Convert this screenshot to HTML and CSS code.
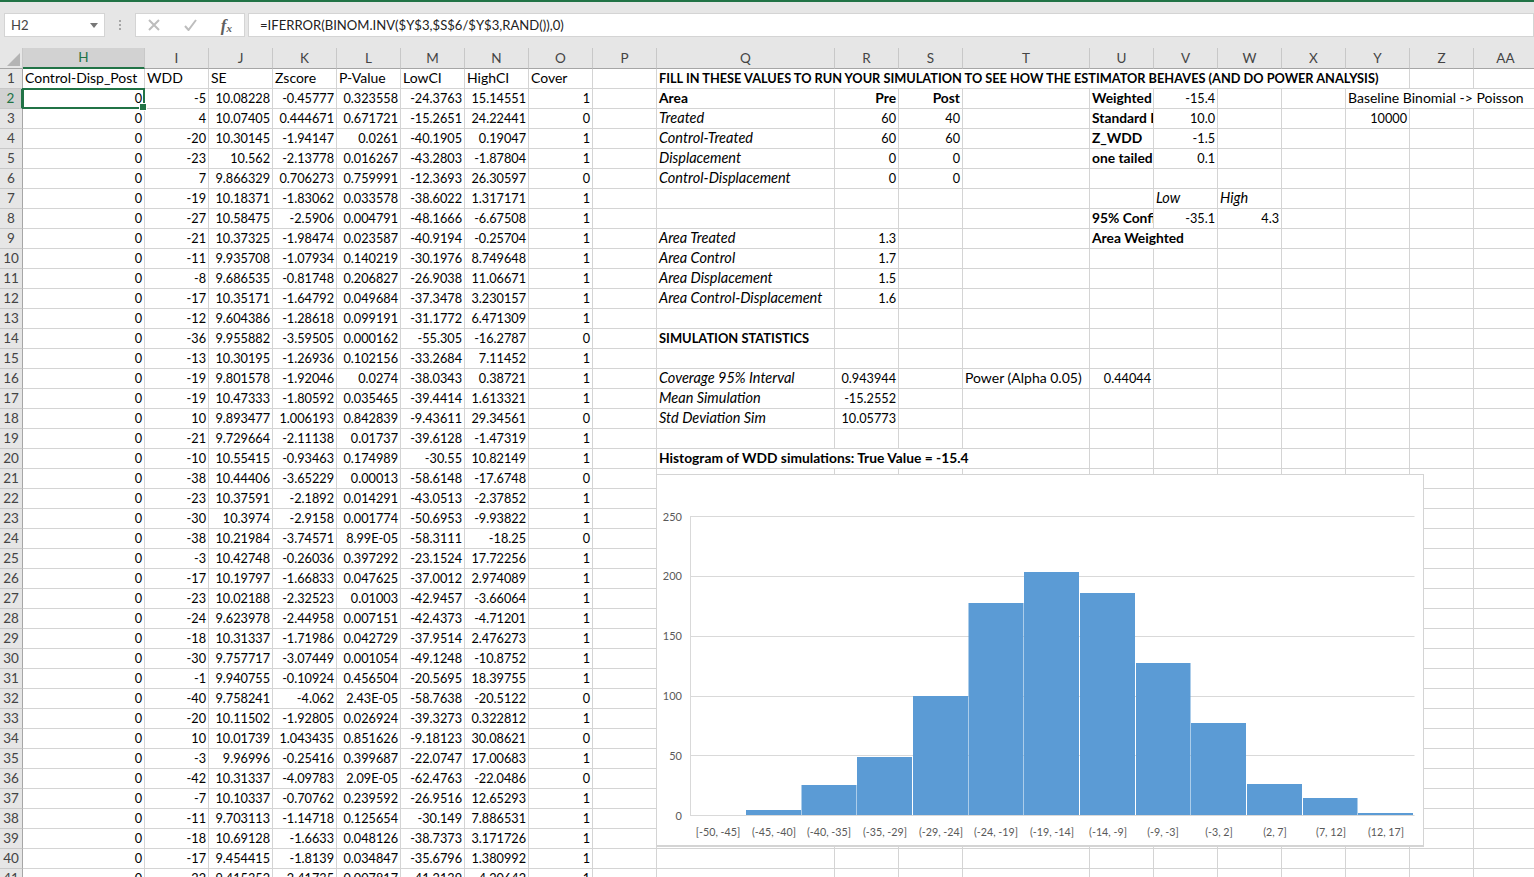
FILE: index.html
```html
<!DOCTYPE html>
<html lang="en">
<head>
<meta charset="utf-8">
<title>Simulation workbook</title>
<link rel="stylesheet" href="styles.css">
</head>
<body>
<div class="app">
<header class="formula-row">
  <div class="name-box"><span>H2</span><svg class="caret" width="8" height="5" viewBox="0 0 8 5"><path d="M0 0h8L4 5z"/></svg></div>
  <div class="grip"><i></i><i></i><i></i></div>
  <div class="fx-buttons">
    <svg class="ic" width="12" height="12" viewBox="0 0 12 12"><path d="M1 1l10 10M11 1L1 11"/></svg>
    <svg class="ic" width="13" height="12" viewBox="0 0 13 12"><path d="M1 7l3.500 4L12 1"/></svg>
    <span class="fx">f<sub>x</sub></span>
  </div>
  <div class="formula-input">=IFERROR(BINOM.INV($Y$3,$S$6/$Y$3,RAND()),0)</div>
</header>
<main class="sheet">
<table class="grid">
<colgroup><col class="c-rh"><col class="c-h"><col class="c"><col class="c"><col class="c"><col class="c"><col class="c"><col class="c"><col class="c"><col class="c"><col class="c-q"><col class="c"><col class="c"><col class="c-t"><col class="c"><col class="c"><col class="c"><col class="c"><col class="c"><col class="c"><col class="c"></colgroup>
<thead><tr><th class="corner"><svg width="13" height="13" viewBox="0 0 13 13"><path d="M13 0v13H0z"/></svg></th><th class="on">H</th><th>I</th><th>J</th><th>K</th><th>L</th><th>M</th><th>N</th><th>O</th><th>P</th><th>Q</th><th>R</th><th>S</th><th>T</th><th>U</th><th>V</th><th>W</th><th>X</th><th>Y</th><th>Z</th><th>AA</th></tr></thead>
<tbody>
<tr><th>1</th><td class="t">Control-Disp_Post</td><td class="t">WDD</td><td class="t">SE</td><td class="t">Zscore</td><td class="t">P-Value</td><td class="t">LowCI</td><td class="t">HighCI</td><td class="t">Cover</td><td></td><td class="t b caps title" colspan="9">FILL IN THESE VALUES TO RUN YOUR SIMULATION TO SEE HOW THE ESTIMATOR BEHAVES (AND DO POWER ANALYSIS)</td><td></td><td></td></tr>
<tr><th class="on">2</th><td class="sel">0</td><td>-5</td><td>10.08228</td><td>-0.45777</td><td>0.323558</td><td>-24.3763</td><td>15.14551</td><td>1</td><td></td><td class="t b">Area</td><td class="b">Pre</td><td class="b">Post</td><td></td><td class="t b">Weighted</td><td>-15.4</td><td></td><td></td><td class="t" colspan="3">Baseline Binomial -&gt; Poisson</td></tr>
<tr><th>3</th><td>0</td><td>4</td><td>10.07405</td><td>0.444671</td><td>0.671721</td><td>-15.2651</td><td>24.22441</td><td>0</td><td></td><td class="t i">Treated</td><td>60</td><td>40</td><td></td><td class="t b">Standard E</td><td>10.0</td><td></td><td></td><td>10000</td><td></td><td></td></tr>
<tr><th>4</th><td>0</td><td>-20</td><td>10.30145</td><td>-1.94147</td><td>0.0261</td><td>-40.1905</td><td>0.19047</td><td>1</td><td></td><td class="t i">Control-Treated</td><td>60</td><td>60</td><td></td><td class="t b">Z_WDD</td><td>-1.5</td><td></td><td></td><td></td><td></td><td></td></tr>
<tr><th>5</th><td>0</td><td>-23</td><td>10.562</td><td>-2.13778</td><td>0.016267</td><td>-43.2803</td><td>-1.87804</td><td>1</td><td></td><td class="t i">Displacement</td><td>0</td><td>0</td><td></td><td class="t b">one tailed</td><td>0.1</td><td></td><td></td><td></td><td></td><td></td></tr>
<tr><th>6</th><td>0</td><td>7</td><td>9.866329</td><td>0.706273</td><td>0.759991</td><td>-12.3693</td><td>26.30597</td><td>0</td><td></td><td class="t i">Control-Displacement</td><td>0</td><td>0</td><td></td><td></td><td></td><td></td><td></td><td></td><td></td><td></td></tr>
<tr><th>7</th><td>0</td><td>-19</td><td>10.18371</td><td>-1.83062</td><td>0.033578</td><td>-38.6022</td><td>1.317171</td><td>1</td><td></td><td></td><td></td><td></td><td></td><td></td><td class="t i">Low</td><td class="t i">High</td><td></td><td></td><td></td><td></td></tr>
<tr><th>8</th><td>0</td><td>-27</td><td>10.58475</td><td>-2.5906</td><td>0.004791</td><td>-48.1666</td><td>-6.67508</td><td>1</td><td></td><td></td><td></td><td></td><td></td><td class="t b">95% Confi</td><td>-35.1</td><td>4.3</td><td></td><td></td><td></td><td></td></tr>
<tr><th>9</th><td>0</td><td>-21</td><td>10.37325</td><td>-1.98474</td><td>0.023587</td><td>-40.9194</td><td>-0.25704</td><td>1</td><td></td><td class="t i">Area Treated</td><td>1.3</td><td></td><td></td><td class="t b" colspan="2">Area Weighted</td><td></td><td></td><td></td><td></td><td></td></tr>
<tr><th>10</th><td>0</td><td>-11</td><td>9.935708</td><td>-1.07934</td><td>0.140219</td><td>-30.1976</td><td>8.749648</td><td>1</td><td></td><td class="t i">Area Control</td><td>1.7</td><td></td><td></td><td></td><td></td><td></td><td></td><td></td><td></td><td></td></tr>
<tr><th>11</th><td>0</td><td>-8</td><td>9.686535</td><td>-0.81748</td><td>0.206827</td><td>-26.9038</td><td>11.06671</td><td>1</td><td></td><td class="t i">Area Displacement</td><td>1.5</td><td></td><td></td><td></td><td></td><td></td><td></td><td></td><td></td><td></td></tr>
<tr><th>12</th><td>0</td><td>-17</td><td>10.35171</td><td>-1.64792</td><td>0.049684</td><td>-37.3478</td><td>3.230157</td><td>1</td><td></td><td class="t i">Area Control-Displacement</td><td>1.6</td><td></td><td></td><td></td><td></td><td></td><td></td><td></td><td></td><td></td></tr>
<tr><th>13</th><td>0</td><td>-12</td><td>9.604386</td><td>-1.28618</td><td>0.099191</td><td>-31.1772</td><td>6.471309</td><td>1</td><td></td><td></td><td></td><td></td><td></td><td></td><td></td><td></td><td></td><td></td><td></td><td></td></tr>
<tr><th>14</th><td>0</td><td>-36</td><td>9.955882</td><td>-3.59505</td><td>0.000162</td><td>-55.305</td><td>-16.2787</td><td>0</td><td></td><td class="t b caps">SIMULATION STATISTICS</td><td></td><td></td><td></td><td></td><td></td><td></td><td></td><td></td><td></td><td></td></tr>
<tr><th>15</th><td>0</td><td>-13</td><td>10.30195</td><td>-1.26936</td><td>0.102156</td><td>-33.2684</td><td>7.11452</td><td>1</td><td></td><td></td><td></td><td></td><td></td><td></td><td></td><td></td><td></td><td></td><td></td><td></td></tr>
<tr><th>16</th><td>0</td><td>-19</td><td>9.801578</td><td>-1.92046</td><td>0.0274</td><td>-38.0343</td><td>0.38721</td><td>1</td><td></td><td class="t i">Coverage 95% Interval</td><td>0.943944</td><td></td><td class="t">Power (Alpha 0.05)</td><td>0.44044</td><td></td><td></td><td></td><td></td><td></td><td></td></tr>
<tr><th>17</th><td>0</td><td>-19</td><td>10.47333</td><td>-1.80592</td><td>0.035465</td><td>-39.4414</td><td>1.613321</td><td>1</td><td></td><td class="t i">Mean Simulation</td><td>-15.2552</td><td></td><td></td><td></td><td></td><td></td><td></td><td></td><td></td><td></td></tr>
<tr><th>18</th><td>0</td><td>10</td><td>9.893477</td><td>1.006193</td><td>0.842839</td><td>-9.43611</td><td>29.34561</td><td>0</td><td></td><td class="t i">Std Deviation Sim</td><td>10.05773</td><td></td><td></td><td></td><td></td><td></td><td></td><td></td><td></td><td></td></tr>
<tr><th>19</th><td>0</td><td>-21</td><td>9.729664</td><td>-2.11138</td><td>0.01737</td><td>-39.6128</td><td>-1.47319</td><td>1</td><td></td><td></td><td></td><td></td><td></td><td></td><td></td><td></td><td></td><td></td><td></td><td></td></tr>
<tr><th>20</th><td>0</td><td>-10</td><td>10.55415</td><td>-0.93463</td><td>0.174989</td><td>-30.55</td><td>10.82149</td><td>1</td><td></td><td class="t b" colspan="4">Histogram of WDD simulations: True Value = -15.4</td><td></td><td></td><td></td><td></td><td></td><td></td><td></td></tr>
<tr><th>21</th><td>0</td><td>-38</td><td>10.44406</td><td>-3.65229</td><td>0.00013</td><td>-58.6148</td><td>-17.6748</td><td>0</td><td></td><td></td><td></td><td></td><td></td><td></td><td></td><td></td><td></td><td></td><td></td><td></td></tr>
<tr><th>22</th><td>0</td><td>-23</td><td>10.37591</td><td>-2.1892</td><td>0.014291</td><td>-43.0513</td><td>-2.37852</td><td>1</td><td></td><td></td><td></td><td></td><td></td><td></td><td></td><td></td><td></td><td></td><td></td><td></td></tr>
<tr><th>23</th><td>0</td><td>-30</td><td>10.3974</td><td>-2.9158</td><td>0.001774</td><td>-50.6953</td><td>-9.93822</td><td>1</td><td></td><td></td><td></td><td></td><td></td><td></td><td></td><td></td><td></td><td></td><td></td><td></td></tr>
<tr><th>24</th><td>0</td><td>-38</td><td>10.21984</td><td>-3.74571</td><td>8.99E-05</td><td>-58.3111</td><td>-18.25</td><td>0</td><td></td><td></td><td></td><td></td><td></td><td></td><td></td><td></td><td></td><td></td><td></td><td></td></tr>
<tr><th>25</th><td>0</td><td>-3</td><td>10.42748</td><td>-0.26036</td><td>0.397292</td><td>-23.1524</td><td>17.72256</td><td>1</td><td></td><td></td><td></td><td></td><td></td><td></td><td></td><td></td><td></td><td></td><td></td><td></td></tr>
<tr><th>26</th><td>0</td><td>-17</td><td>10.19797</td><td>-1.66833</td><td>0.047625</td><td>-37.0012</td><td>2.974089</td><td>1</td><td></td><td></td><td></td><td></td><td></td><td></td><td></td><td></td><td></td><td></td><td></td><td></td></tr>
<tr><th>27</th><td>0</td><td>-23</td><td>10.02188</td><td>-2.32523</td><td>0.01003</td><td>-42.9457</td><td>-3.66064</td><td>1</td><td></td><td></td><td></td><td></td><td></td><td></td><td></td><td></td><td></td><td></td><td></td><td></td></tr>
<tr><th>28</th><td>0</td><td>-24</td><td>9.623978</td><td>-2.44958</td><td>0.007151</td><td>-42.4373</td><td>-4.71201</td><td>1</td><td></td><td></td><td></td><td></td><td></td><td></td><td></td><td></td><td></td><td></td><td></td><td></td></tr>
<tr><th>29</th><td>0</td><td>-18</td><td>10.31337</td><td>-1.71986</td><td>0.042729</td><td>-37.9514</td><td>2.476273</td><td>1</td><td></td><td></td><td></td><td></td><td></td><td></td><td></td><td></td><td></td><td></td><td></td><td></td></tr>
<tr><th>30</th><td>0</td><td>-30</td><td>9.757717</td><td>-3.07449</td><td>0.001054</td><td>-49.1248</td><td>-10.8752</td><td>1</td><td></td><td></td><td></td><td></td><td></td><td></td><td></td><td></td><td></td><td></td><td></td><td></td></tr>
<tr><th>31</th><td>0</td><td>-1</td><td>9.940755</td><td>-0.10924</td><td>0.456504</td><td>-20.5695</td><td>18.39755</td><td>1</td><td></td><td></td><td></td><td></td><td></td><td></td><td></td><td></td><td></td><td></td><td></td><td></td></tr>
<tr><th>32</th><td>0</td><td>-40</td><td>9.758241</td><td>-4.062</td><td>2.43E-05</td><td>-58.7638</td><td>-20.5122</td><td>0</td><td></td><td></td><td></td><td></td><td></td><td></td><td></td><td></td><td></td><td></td><td></td><td></td></tr>
<tr><th>33</th><td>0</td><td>-20</td><td>10.11502</td><td>-1.92805</td><td>0.026924</td><td>-39.3273</td><td>0.322812</td><td>1</td><td></td><td></td><td></td><td></td><td></td><td></td><td></td><td></td><td></td><td></td><td></td><td></td></tr>
<tr><th>34</th><td>0</td><td>10</td><td>10.01739</td><td>1.043435</td><td>0.851626</td><td>-9.18123</td><td>30.08621</td><td>0</td><td></td><td></td><td></td><td></td><td></td><td></td><td></td><td></td><td></td><td></td><td></td><td></td></tr>
<tr><th>35</th><td>0</td><td>-3</td><td>9.96996</td><td>-0.25416</td><td>0.399687</td><td>-22.0747</td><td>17.00683</td><td>1</td><td></td><td></td><td></td><td></td><td></td><td></td><td></td><td></td><td></td><td></td><td></td><td></td></tr>
<tr><th>36</th><td>0</td><td>-42</td><td>10.31337</td><td>-4.09783</td><td>2.09E-05</td><td>-62.4763</td><td>-22.0486</td><td>0</td><td></td><td></td><td></td><td></td><td></td><td></td><td></td><td></td><td></td><td></td><td></td><td></td></tr>
<tr><th>37</th><td>0</td><td>-7</td><td>10.10337</td><td>-0.70762</td><td>0.239592</td><td>-26.9516</td><td>12.65293</td><td>1</td><td></td><td></td><td></td><td></td><td></td><td></td><td></td><td></td><td></td><td></td><td></td><td></td></tr>
<tr><th>38</th><td>0</td><td>-11</td><td>9.703113</td><td>-1.14718</td><td>0.125654</td><td>-30.149</td><td>7.886531</td><td>1</td><td></td><td></td><td></td><td></td><td></td><td></td><td></td><td></td><td></td><td></td><td></td><td></td></tr>
<tr><th>39</th><td>0</td><td>-18</td><td>10.69128</td><td>-1.6633</td><td>0.048126</td><td>-38.7373</td><td>3.171726</td><td>1</td><td></td><td></td><td></td><td></td><td></td><td></td><td></td><td></td><td></td><td></td><td></td><td></td></tr>
<tr><th>40</th><td>0</td><td>-17</td><td>9.454415</td><td>-1.8139</td><td>0.034847</td><td>-35.6796</td><td>1.380992</td><td>1</td><td></td><td></td><td></td><td></td><td></td><td></td><td></td><td></td><td></td><td></td><td></td><td></td></tr>
<tr><th>41</th><td>0</td><td>-22</td><td>9.415352</td><td>-2.41735</td><td>0.007817</td><td>-41.2139</td><td>-4.20642</td><td>1</td><td></td><td></td><td></td><td></td><td></td><td></td><td></td><td></td><td></td><td></td><td></td><td></td></tr>
</tbody>
</table>
<figure class="chart">
<svg width="768" height="373" viewBox="656 474 768 373">
  <g class="gl">
    <path d="M690.500 516.500H1414.500M690.500 576.500H1414.500M690.500 636.500H1414.500M690.500 696.500H1414.500M690.500 755.500H1414.500M690.500 815.500H1414.500M690.500 516V816"/>
  </g>
  <g class="bars">
    <rect x="746" y="810" width="55" height="5"/>
    <rect x="801.500" y="785" width="55" height="30"/>
    <rect x="857" y="757" width="55" height="58"/>
    <rect x="913" y="696" width="55" height="119"/>
    <rect x="968.500" y="603" width="55" height="212"/>
    <rect x="1024" y="572" width="55" height="243"/>
    <rect x="1080" y="593" width="55" height="222"/>
    <rect x="1136" y="663" width="54.500" height="152"/>
    <rect x="1191" y="723" width="55" height="92"/>
    <rect x="1247" y="784" width="55" height="31"/>
    <rect x="1303" y="798" width="54.500" height="17"/>
    <rect x="1358" y="813" width="55" height="2"/>
  </g>
  <g class="ya">
    <text x="682" y="521">250</text><text x="682" y="580">200</text><text x="682" y="640">150</text><text x="682" y="700">100</text><text x="682" y="760">50</text><text x="682" y="820">0</text>
  </g>
  <g class="xa">
    <text x="718" y="836">[-50, -45]</text><text x="774" y="836">(-45, -40]</text><text x="829" y="836">(-40, -35]</text><text x="885" y="836">(-35, -29]</text><text x="941" y="836">(-29, -24]</text><text x="996" y="836">(-24, -19]</text><text x="1052" y="836">(-19, -14]</text><text x="1108" y="836">(-14, -9]</text><text x="1163" y="836">(-9, -3]</text><text x="1219" y="836">(-3, 2]</text><text x="1275" y="836">(2, 7]</text><text x="1331" y="836">(7, 12]</text><text x="1386" y="836">(12, 17]</text>
  </g>
</svg>
</figure>
</main>
</div>
</body>
</html>
```

FILE: styles.css
```css
* { box-sizing: border-box; }
html, body { margin: 0; padding: 0; }
body { width: 1534px; height: 877px; overflow: hidden; background: #fff; font-family: "Lato", "Liberation Sans", sans-serif; color: #000; }
.app { display: flex; flex-direction: column; height: 877px; overflow: hidden; }

.formula-row { flex: none; height: 48px; display: flex; align-items: flex-start; padding: 11px 0 0 4px; background: #e6e6e6; border-top: 2px solid #217346; color: #444; font-size: 13.100px; }
.name-box { width: 101px; height: 24px; background: #fff; border: 1px solid #d4d4d4; display: flex; align-items: center; justify-content: space-between; padding: 0 6px 0 6px; }
.caret path { fill: #777; }
.grip { width: 30px; height: 24px; display: flex; flex-direction: column; align-items: center; justify-content: center; gap: 2px; }
.grip i { width: 2px; height: 2px; background: #a6a6a6; }
.fx-buttons { width: 110px; height: 24px; background: #fff; border: 1px solid #d4d4d4; display: flex; align-items: center; justify-content: space-between; padding: 0 12px 0 12px; }
.ic path { fill: none; stroke: #bdbdbd; stroke-width: 2; }
.fx { font-family: "Liberation Serif", serif; font-style: italic; font-weight: bold; font-size: 17px; color: #5f5f5f; line-height: 1; }
.fx sub { font-size: 11px; vertical-align: -1px; line-height: 0; }
.formula-input { flex: 1; height: 24px; margin-left: 3px; background: #fff; border: 1px solid #d4d4d4; padding: 0 0 0 11px; line-height: 22px; white-space: nowrap; color: #222; }

.sheet { position: relative; flex: 1; overflow: hidden; }
.grid { table-layout: fixed; width: 1538px; border-collapse: separate; border-spacing: 0; font-size: 13.500px; line-height: 19px; }
.c-rh { width: 23px; }
.c-h { width: 122px; }
.c { width: 64px; }
.c-q { width: 178px; }
.c-t { width: 127px; }
th { height: 20px; padding: 0; font-weight: 400; background: #e6e6e6; color: #444; text-align: center; border-right: 1px solid #c8c8c8; border-bottom: 1px solid #c8c8c8; }
thead th { border-bottom-color: #a6a6a6; }
tbody th { border-right-color: #a6a6a6; }
th.on { background: #d2d2d2; color: #217346; }
thead th.on { border-bottom: 2px solid #217346; }
tbody th.on { border-right: 2px solid #217346; }
.corner { vertical-align: bottom; text-align: right; padding: 0 2px 2px 0; }
.corner svg { display: block; margin-left: auto; }
.corner path { fill: #b4b4b4; }
td { height: 20px; padding: 0 2px 0 2px; font-size: 12.700px; line-height: 19px; text-align: right; white-space: nowrap; overflow: hidden; border-right: 1px solid #d4d4d4; border-bottom: 1px solid #d4d4d4; }
td.t { text-align: left; font-size: 14px; line-height: 17px; padding-bottom: 2px; }
td.b { font-weight: 700; font-size: 13.800px; line-height: 17px; padding-bottom: 2px; }
td.i { font-style: italic; font-size: 14.500px; line-height: 17px; padding-bottom: 2px; }
td.caps { font-size: 12.900px; line-height: 19px; padding-bottom: 0; }
td.title { font-size: 12.750px; }
td.sel { position: relative; overflow: visible; }
td.sel::before { content: ""; position: absolute; inset: -1px -1px -1px -1px; border: 2px solid #217346; pointer-events: none; }
td.sel::after { content: ""; position: absolute; right: -3px; bottom: -3px; width: 6px; height: 6px; background: #217346; border: 1px solid #fff; }

.chart { position: absolute; left: 656px; top: 426px; width: 768px; height: 373px; margin: 0; background: #fff; border-left: 1px solid #d4d4d4; border-top: 1px solid #d4d4d4; border-right: 1px solid #d4d4d4; border-bottom: 2px solid #d4d4d4; overflow: hidden; }
.chart svg { display: block; margin: -1px 0 0 -1px; }
.gl path { fill: none; stroke: #d9d9d9; stroke-width: 1; }
.bars rect { fill: #5b9bd5; }
.ya text, .xa text { font-size: 11px; fill: #595959; }
.ya text { text-anchor: end; }
.xa text { text-anchor: middle; font-size: 10.700px; }
```
